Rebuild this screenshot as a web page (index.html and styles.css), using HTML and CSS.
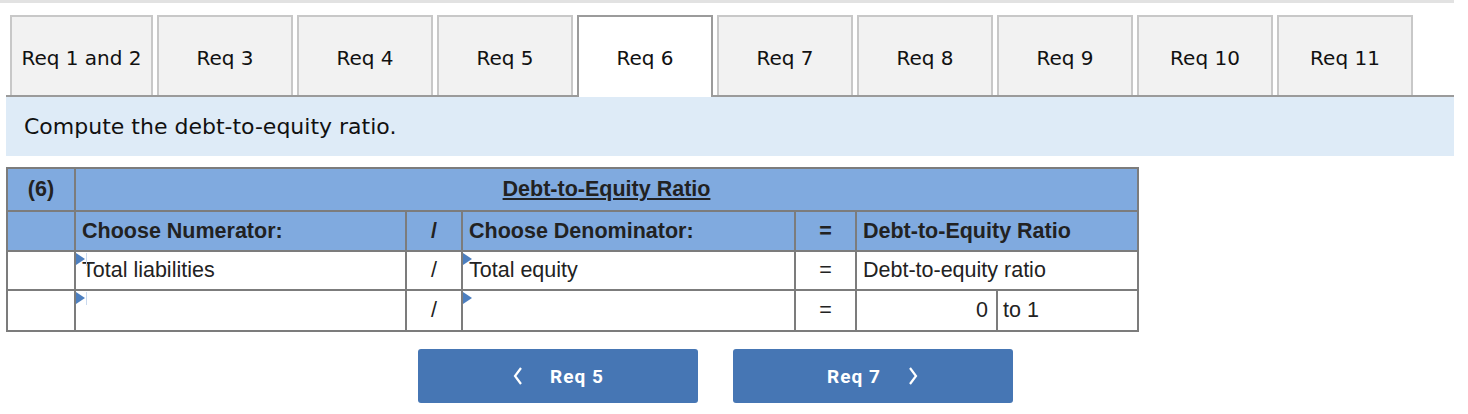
FILE: index.html
```html
<!DOCTYPE html>
<html lang="en">
<head>
    <meta charset="UTF-8">
    <title>Req 6</title>
    <link rel="stylesheet" href="styles.css">
</head>
<body>
    <div class="topbar"></div>

    <ul class="tabs">
        <li class="tab tab-first">Req 1 and 2</li>
        <li class="tab">Req 3</li>
        <li class="tab">Req 4</li>
        <li class="tab">Req 5</li>
        <li class="tab active">Req 6</li>
        <li class="tab">Req 7</li>
        <li class="tab">Req 8</li>
        <li class="tab">Req 9</li>
        <li class="tab">Req 10</li>
        <li class="tab">Req 11</li>
    </ul>

    <div class="panel">Compute the debt-to-equity ratio.</div>

    <table class="ratio">
        <colgroup>
            <col class="c-num">
            <col class="c-top">
            <col class="c-op">
            <col class="c-bottom">
            <col class="c-op2">
            <col class="c-value">
            <col class="c-unit">
        </colgroup>
        <tr class="row-title">
            <th>(6)</th>
            <th colspan="6"><span class="title">Debt-to-Equity Ratio</span></th>
        </tr>
        <tr class="row-head">
            <th></th>
            <th class="left">Choose Numerator:</th>
            <th>/</th>
            <th class="left">Choose Denominator:</th>
            <th>=</th>
            <th class="left" colspan="2">Debt-to-Equity Ratio</th>
        </tr>
        <tr class="row-data">
            <td></td>
            <td class="left pick"><span class="marker"></span><span class="caret"></span>Total liabilities</td>
            <td>/</td>
            <td class="left pick"><span class="marker"></span>Total equity</td>
            <td>=</td>
            <td class="left" colspan="2">Debt-to-equity ratio</td>
        </tr>
        <tr class="row-input">
            <td></td>
            <td class="left pick"><span class="marker"></span><span class="caret"></span></td>
            <td>/</td>
            <td class="left pick"><span class="marker"></span></td>
            <td>=</td>
            <td class="right">0</td>
            <td class="left unit">to 1</td>
        </tr>
    </table>

    <div class="nav">
        <button class="nav-btn">
            <svg width="12" height="20" viewBox="0 0 12 20"><polyline points="9,2 3,10 9,18" fill="none" stroke="#fff" stroke-width="2.2"/></svg>
            <span>Req 5</span>
        </button>
        <button class="nav-btn">
            <span>Req 7</span>
            <svg width="12" height="20" viewBox="0 0 12 20"><polyline points="3,2 9,10 3,18" fill="none" stroke="#fff" stroke-width="2.2"/></svg>
        </button>
    </div>
</body>
</html>
```

FILE: styles.css
```css
/* Global */
* {
    margin: 0;
    padding: 0;
    box-sizing: border-box;
}

body {
    background-color: #fff;
    color: #111;
    font-family: "DejaVu Sans", Verdana, sans-serif;
    width: 1468px;
}

/* Top strip */
.topbar {
    width: 1454px;
    height: 3px;
    background-color: #e2e2e2;
}

/* Tabs */
.tabs {
    list-style-type: none;
    display: flex;
    gap: 4px;
    margin-top: 12px;
    padding-left: 10px;
}

.tab {
    width: 136px;
    height: 80px;
    display: flex;
    align-items: center;
    justify-content: center;
    background-color: #f2f2f2;
    border: 2px solid #c8c8c8;
    border-bottom: none;
    font-size: 20px;
    padding-top: 4px;
}

.tab-first {
    width: 143px;
}

.tab.active {
    background-color: #fff;
    border-color: #9b9b9b;
    height: 82px;
    margin-bottom: -2px;
    padding-bottom: 2px;
    position: relative;
    z-index: 1;
}

/* Instruction panel */
.panel {
    margin-left: 6px;
    width: 1448px;
    height: 61px;
    border-top: 2px solid #9b9b9b;
    background-color: #deebf7;
    font-size: 22px;
    padding: 17px 0 0 18px;
}

/* Ratio table */
.ratio {
    margin: 11px 0 0 6px;
    width: 1131px;
    border-collapse: collapse;
    border: 2px solid #7c7c7c;
    font-family: "Liberation Sans", Arial, sans-serif;
    font-size: 21.5px;
    color: #222;
    table-layout: fixed;
}

.c-num { width: 68px; }
.c-top { width: 331px; }
.c-op { width: 56px; }
.c-bottom { width: 333px; }
.c-op2 { width: 61px; }
.c-value { width: 141px; }
.c-unit { width: 141px; }

.ratio th,
.ratio td {
    border: 2px solid #7c7c7c;
    text-align: center;
    padding: 0 6px;
    white-space: nowrap;
}

.ratio th {
    background-color: #80aadf;
    font-weight: bold;
}

.ratio .left {
    text-align: left;
}

.ratio .right {
    text-align: right;
    padding-right: 8px;
}

.ratio .unit {
    padding-left: 5px;
}

.row-title { height: 43px; }
.row-head { height: 40px; }
.row-data { height: 39px; }
.row-input { height: 41px; }

.title {
    text-decoration: underline;
}

.pick {
    position: relative;
}

.marker {
    position: absolute;
    left: 0;
    top: 1px;
    width: 0;
    height: 0;
    border-top: 6px solid transparent;
    border-bottom: 6px solid transparent;
    border-left: 9px solid #4d7fbf;
}

.caret {
    position: absolute;
    left: 10px;
    top: 1px;
    width: 1px;
    height: 13px;
    background-color: #c9d9ee;
}

/* Nav buttons */
.nav {
    display: flex;
    gap: 35px;
    margin: 17px 0 0 418px;
}

.nav-btn {
    width: 280px;
    height: 54px;
    border: none;
    border-radius: 3px;
    background-color: #4676b4;
    color: #fff;
    font-family: Roboto, "Liberation Sans", sans-serif;
    font-weight: bold;
    font-size: 19px;
    letter-spacing: 1px;
    display: flex;
    align-items: center;
    justify-content: center;
    gap: 26px;
}
```
